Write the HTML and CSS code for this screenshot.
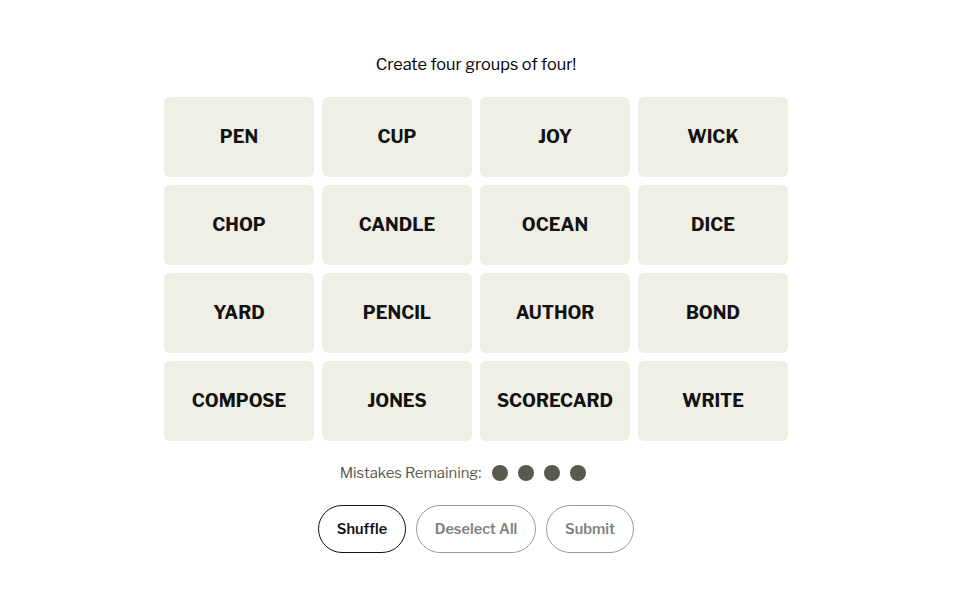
FILE: index.html
```html
<!DOCTYPE html>
<html lang="en">
<head>
  <meta charset="UTF-8">
  <title>Connections</title>
  <link rel="stylesheet" href="styles.css">
</head>
<body>

  <main class="game">
    <p class="intro">Create four groups of four!</p>

    <!-- Word grid -->
    <div class="board">
      <button class="tile">PEN</button>
      <button class="tile">CUP</button>
      <button class="tile">JOY</button>
      <button class="tile">WICK</button>
      <button class="tile">CHOP</button>
      <button class="tile">CANDLE</button>
      <button class="tile">OCEAN</button>
      <button class="tile">DICE</button>
      <button class="tile">YARD</button>
      <button class="tile">PENCIL</button>
      <button class="tile">AUTHOR</button>
      <button class="tile">BOND</button>
      <button class="tile">COMPOSE</button>
      <button class="tile">JONES</button>
      <button class="tile">SCORECARD</button>
      <button class="tile">WRITE</button>
    </div>

    <!-- Mistakes -->
    <div class="mistakes">
      <span>Mistakes Remaining:</span>
      <span class="dots">
        <span class="dot"></span>
        <span class="dot"></span>
        <span class="dot"></span>
        <span class="dot"></span>
      </span>
    </div>

    <!-- Controls -->
    <div class="controls">
      <button class="pill active">Shuffle</button>
      <button class="pill wide">Deselect All</button>
      <button class="pill">Submit</button>
    </div>
  </main>

</body>
</html>
```

FILE: styles.css
```css
body {
  margin: 0;
  padding: 0 5px 0 0;
  background-color: #fff;
  color: #000;
  font-family: 'Libre Franklin', Roboto, 'Liberation Sans', sans-serif;
}

.game {
  width: 624px;
  margin: 0 auto;
  padding-top: 52px;
}

.intro {
  margin: 0 0 21px;
  text-align: center;
  font-size: 16.3px;
  line-height: 24px;
}

.board {
  display: grid;
  grid-template-columns: repeat(4, 150px);
  grid-auto-rows: 80px;
  gap: 8px;
}

.tile {
  border: none;
  border-radius: 6px;
  background-color: #efefe6;
  color: #121212;
  font-family: inherit;
  font-size: 18px;
  font-weight: bold;
  padding: 0 0 2px;
  cursor: pointer;
}

.mistakes {
  display: flex;
  justify-content: center;
  align-items: center;
  gap: 11px;
  margin-top: 22px;
  padding-right: 26px;
  color: #5a594e;
  font-size: 14.8px;
  height: 20px;
}

.dots {
  display: flex;
  gap: 10px;
}

.dot {
  width: 16px;
  height: 16px;
  border-radius: 50%;
  background-color: #5a594e;
}

.controls {
  display: flex;
  justify-content: center;
  gap: 10px;
  margin-top: 22px;
}

.pill {
  width: 88px;
  height: 48px;
  border: 1px solid #999;
  border-radius: 24px;
  background-color: #fff;
  color: #7f7f7f;
  font-family: inherit;
  font-size: 14.5px;
  font-weight: 600;
  cursor: pointer;
}

.pill.wide {
  width: 120px;
}

.pill.active {
  border-color: #121212;
  color: #121212;
}
```
